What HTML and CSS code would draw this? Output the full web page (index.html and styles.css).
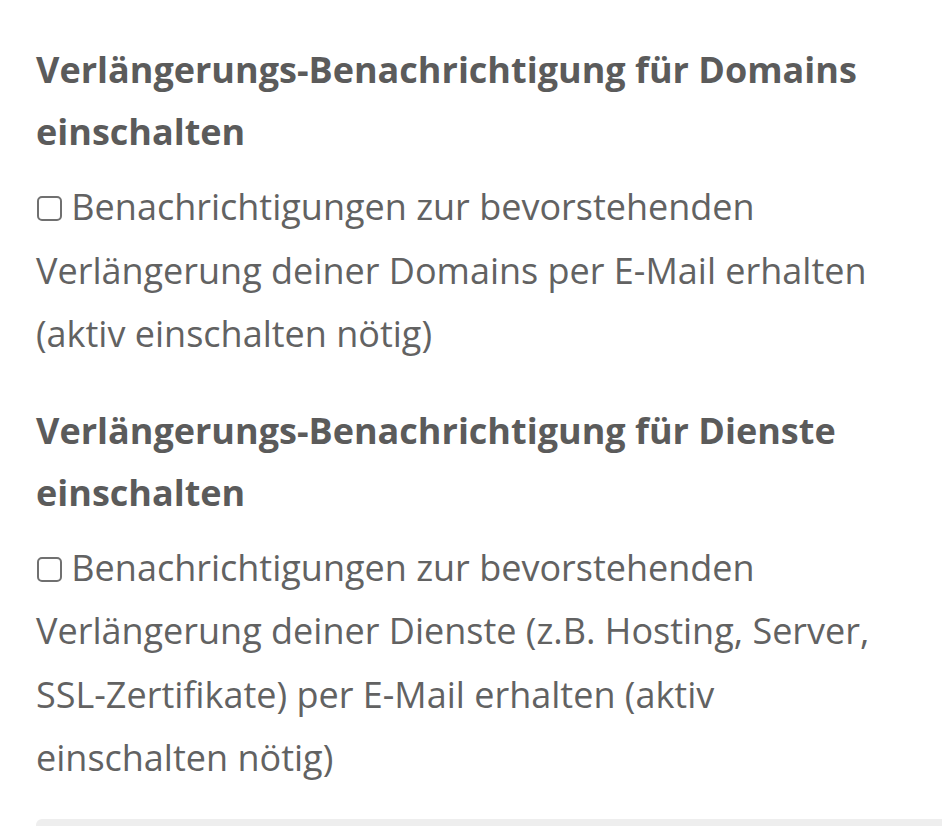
FILE: index.html
```html
<!DOCTYPE html>
<html lang="de">
<head>
  <meta charset="UTF-8">
  <meta name="viewport" content="width=device-width, initial-scale=1">
  <title>Benachrichtigungen</title>
  <link rel="stylesheet" href="styles.css">
</head>
<body>

<div class="settings">
  <div class="option">
    <h4>Verlängerungs-Benachrichtigung für Domains einschalten</h4>
    <label class="check">
      <input type="checkbox" name="notify_domains">
      Benachrichtigungen zur bevorstehenden Verlängerung deiner Domains per E-Mail erhalten (aktiv einschalten nötig)
    </label>
  </div>

  <div class="option">
    <h4>Verlängerungs-Benachrichtigung für Dienste einschalten</h4>
    <label class="check">
      <input type="checkbox" name="notify_services">
      Benachrichtigungen zur bevorstehenden Verlängerung deiner Dienste (z.B. Hosting, Server, SSL-Zertifikate) per E-Mail erhalten (aktiv einschalten nötig)
    </label>
  </div>

  <div class="footer-box"></div>
</div>

</body>
</html>
```

FILE: styles.css
```css
body {
  margin: 0;
  background: #fff;
  color: #626262;
  font-family: "Open Sans", Arial, sans-serif;
  overflow: hidden;
}

.settings {
  padding: 39px 0 0 36px;
}

.option {
  max-width: 860px;
  margin-bottom: 34px;
}

.option h4 {
  margin: 0 0 12px;
  font-size: 36px;
  font-weight: 700;
  line-height: 62px;
  color: #5b5b5b;
}

.check {
  display: block;
  font-size: 36px;
  line-height: 63.5px;
}

.check input {
  appearance: none;
  -webkit-appearance: none;
  width: 25px;
  height: 25px;
  margin: 0 0 0 1px;
  border: 2px solid #707070;
  border-radius: 5px;
  background: #fff;
  vertical-align: -1px;
  box-sizing: border-box;
}

.footer-box {
  height: 40px;
  margin-top: -5px;
  background: #eeeeee;
  border-radius: 6px 0 0 0;
}
```
